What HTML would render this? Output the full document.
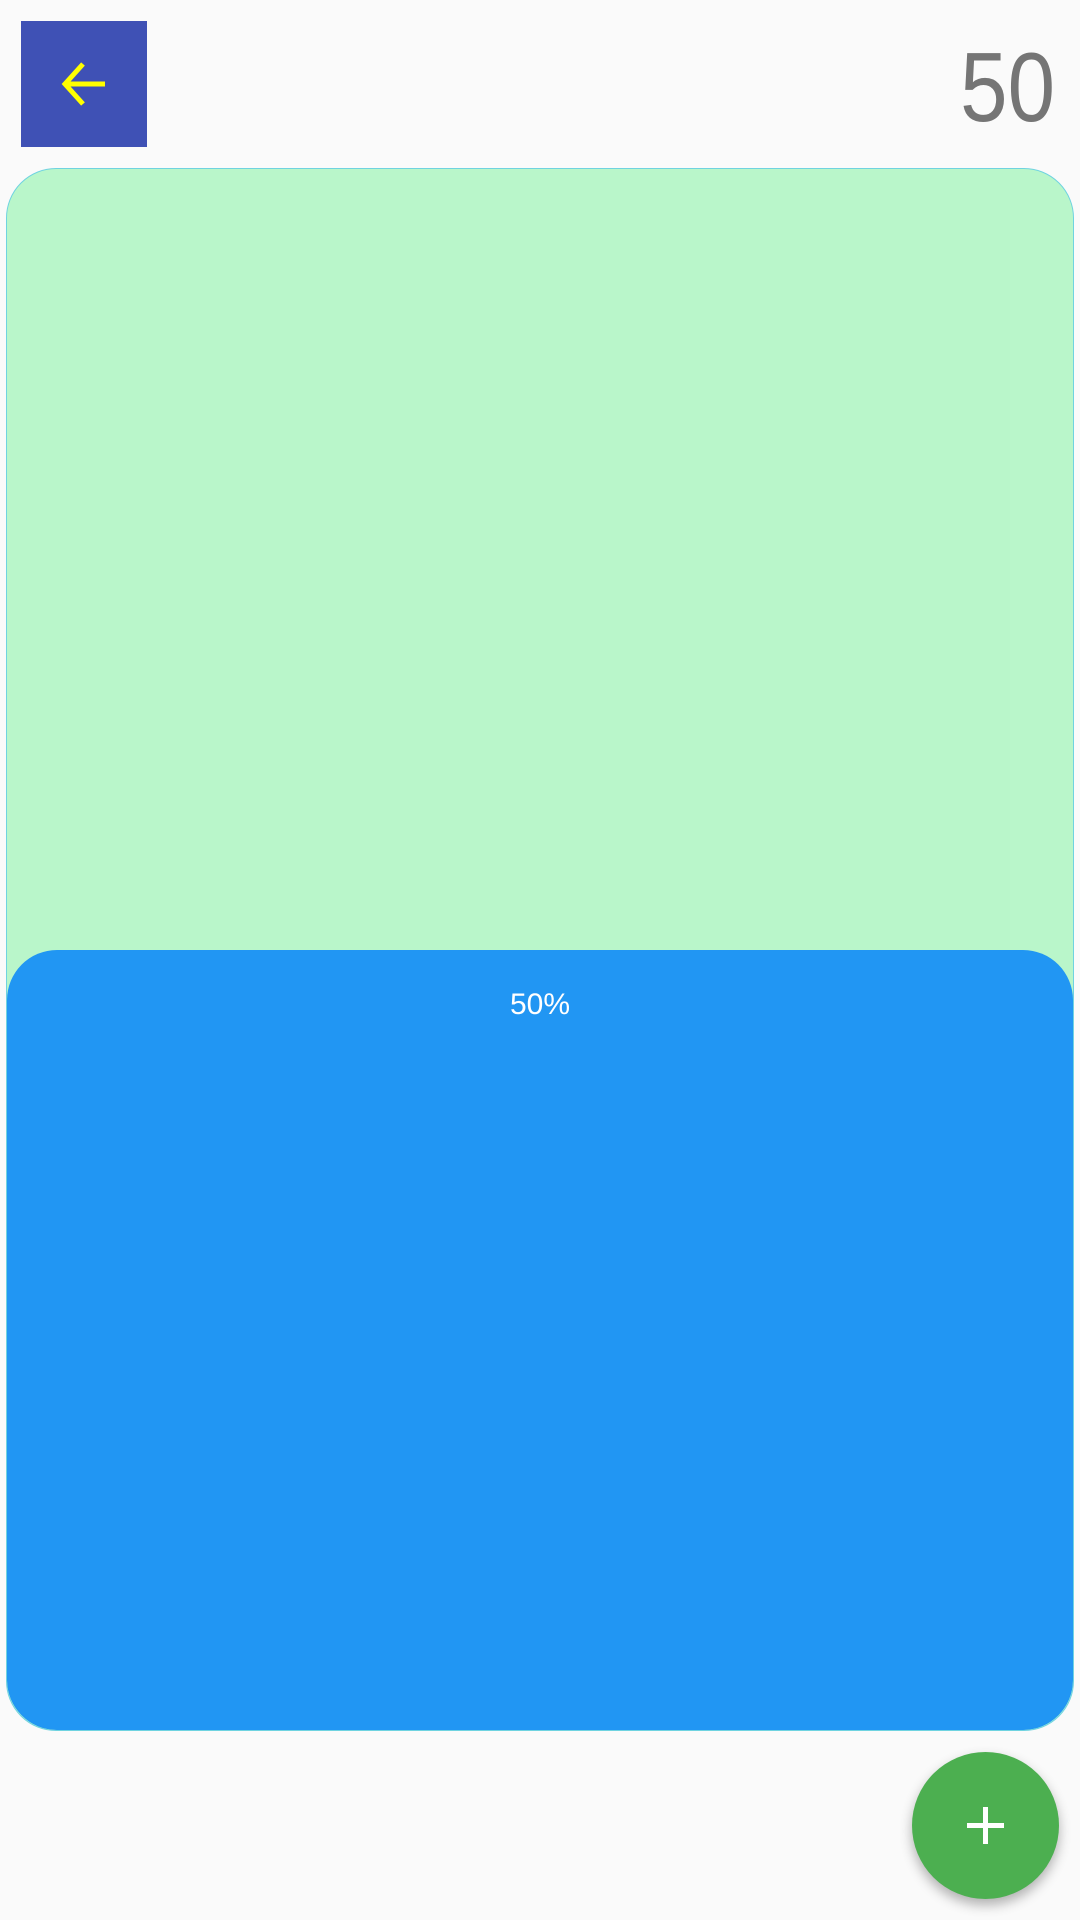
<!DOCTYPE html>
<html><head><style>
html,body{margin:0;padding:0;width:1080px;height:1920px;background:#fafafa;overflow:hidden;font-family:"Liberation Sans",sans-serif;}
.back{position:absolute;left:21px;top:21px;width:126px;height:126px;background:#3f51b5;}
.num{position:absolute;right:25px;top:30px;font-size:98px;color:#757575;line-height:115px;transform:scaleX(0.87);transform-origin:right center;}
.card{position:absolute;left:6px;top:168px;width:1066px;height:1561px;border:1px solid #6fd3e0;border-radius:50px;background:#b9f6ca;overflow:hidden;}
.fill{position:absolute;left:0;right:0;top:781px;bottom:0;background:#2196f3;border-radius:50px;}
.pct{position:absolute;top:38px;width:100%;text-align:center;color:#fff;font-size:30px;}
.fab{position:absolute;left:912px;top:1752px;width:147px;height:147px;border-radius:50%;background:#4caf50;box-shadow:0 6px 12px rgba(0,0,0,.3);}
</style></head><body>
<div class="back"><svg width="126" height="126" viewBox="0 0 126 126"><path d="M84 63H44M62 43L44 63L62 83" stroke="#ffff00" stroke-width="5" fill="none"/></svg></div>
<div class="num">50</div>
<div class="card"><div class="fill"><div class="pct">50%</div></div></div>
<div class="fab"><svg width="147" height="147" viewBox="0 0 147 147"><path d="M73.5 55v37M55 73.5h37" stroke="#fff" stroke-width="5"/></svg></div>
</body></html>
